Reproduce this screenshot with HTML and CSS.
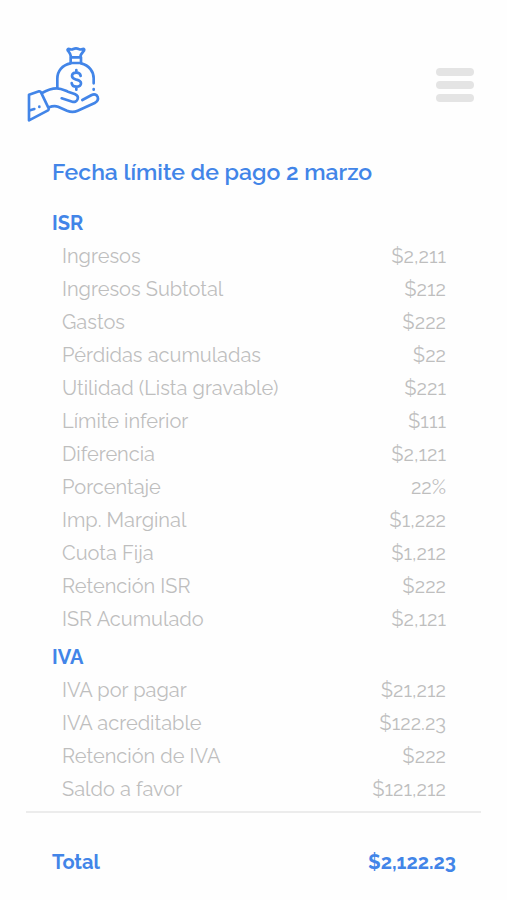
FILE: index.html
```html
<!DOCTYPE html>
<html lang="es">
<head>
<meta charset="utf-8">
<meta name="viewport" content="width=device-width, initial-scale=1">
<title>Fecha límite de pago</title>
<link rel="stylesheet" href="styles.css">
</head>
<body>
<header class="topbar">
  <a class="logo" href="#" aria-label="Inicio">
    <svg viewBox="0 0 270 270" aria-hidden="true">
      <path d="M153 50C152 41 147 36 143 31Q141 26 148 27Q154 30 160 27Q168 23 176 27Q183 30 188 27Q195 26 192 32C187 38 182 42 181 50"/>
      <path d="M152 52H183V69H152Z"/>
      <path d="M152 70C126 75 112 94 112 116V143M183 70C208 76 221 95 221 115V130"/>
      <path d="M221 147V149"/>
      <path d="M182 108C181 100 175 98 169 98C161 98 156 102 156 108C156 115 162 117 169 119C177 121 183 124 183 130C183 137 177 140 169 140C161 140 156 137 155 129M169 90V98M169 140V149"/>
      <path d="M27 164L57 154Q61 153 63 157L86 205Q87 209 84 211L27 241Z"/>
      <path d="M66 159C80 151 96 145 110 145C124 145 134 151 144 155L164 162C171 165 175 171 173 177C171 184 164 187 157 185L125 175"/>
      <path d="M187 180L215 165C223 161 231 164 233 171C236 179 231 185 224 189L173 212C162 217 151 216 141 212L114 200C105 197 97 198 87 202"/>
      <path d="M30 211L43 207M58 200V201"/>
    </svg>
  </a>
  <button class="menu" type="button" aria-label="Menú"><span></span><span></span><span></span></button>
</header>
<main>
  <h1>Fecha límite de pago 2 marzo</h1>
  <section class="group">
    <h2>ISR</h2>
    <table aria-label="ISR">
      <tr><th scope="row">Ingresos</th><td>$2,211</td></tr>
      <tr><th scope="row">Ingresos Subtotal</th><td>$212</td></tr>
      <tr><th scope="row">Gastos</th><td>$222</td></tr>
      <tr><th scope="row">Pérdidas acumuladas</th><td>$22</td></tr>
      <tr><th scope="row">Utilidad (Lista gravable)</th><td>$221</td></tr>
      <tr><th scope="row">Límite inferior</th><td>$111</td></tr>
      <tr><th scope="row">Diferencia</th><td>$2,121</td></tr>
      <tr><th scope="row">Porcentaje</th><td>22%</td></tr>
      <tr><th scope="row">Imp. Marginal</th><td>$1,222</td></tr>
      <tr><th scope="row">Cuota Fija</th><td>$1,212</td></tr>
      <tr><th scope="row">Retención ISR</th><td>$222</td></tr>
      <tr><th scope="row">ISR Acumulado</th><td>$2,121</td></tr>
    </table>
  </section>
  <section class="group">
    <h2>IVA</h2>
    <table aria-label="IVA">
      <tr><th scope="row">IVA por pagar</th><td>$21,212</td></tr>
      <tr><th scope="row">IVA acreditable</th><td>$122.23</td></tr>
      <tr><th scope="row">Retención de IVA</th><td>$222</td></tr>
      <tr><th scope="row">Saldo a favor</th><td>$121,212</td></tr>
    </table>
  </section>
  <div class="total"><span>Total</span><span>$2,122.23</span></div>
</main>
</body>
</html>
```
FILE: styles.css
```css
* { box-sizing: border-box; }
body {
  margin: 0;
  background: #fefefe;
  color: #bebebe;
  font-family: Raleway, Lato, sans-serif;
  font-size: 20px;
  line-height: 32px;
  font-variant-numeric: oldstyle-nums proportional-nums;
}
.topbar {
  display: flex;
  align-items: center;
  justify-content: space-between;
  padding: 40px 33px 0 20px;
}
.logo { display: block; width: 90px; height: 90px; }
.logo svg {
  display: block;
  width: 100%;
  fill: none;
  stroke: #4285e8;
  stroke-width: 8;
  stroke-linecap: round;
  stroke-linejoin: round;
}
.menu {
  display: flex;
  flex-direction: column;
  gap: 5px;
  width: 38px;
  padding: 0;
  border: 0;
  background: none;
}
.menu span { height: 8px; border-radius: 4px; background: #e4e4e4; }
main { padding: 26px 26px 0; }
h1, h2 { margin: 0; padding-left: 26px; color: #4285e8; font-weight: 700; }
h1 { font-size: 23px; font-weight: 600; margin-bottom: 19px; }
h2 { font-size: 20px; }
.group { padding-bottom: 6px; }
table { width: 100%; border-collapse: collapse; }
tr { height: 33px; }
th, td { padding: 0; font-weight: 400; }
th { padding-left: 36px; text-align: left; }
td { padding-right: 35px; text-align: right; }
.total {
  display: flex;
  justify-content: space-between;
  padding: 33px 25px 3px 26px;
  border-top: 2px solid #ececec;
  color: #4285e8;
  font-weight: 700;
}
```
